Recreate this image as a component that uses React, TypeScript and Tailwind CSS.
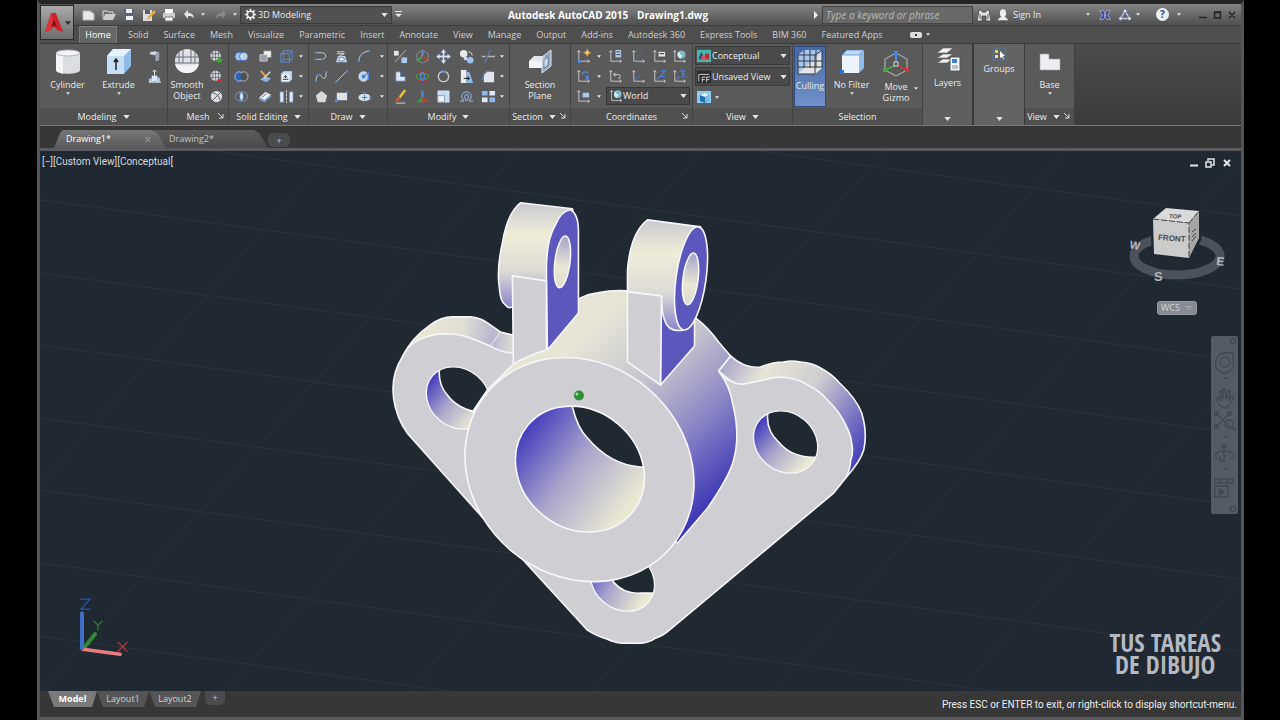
import type { ReactNode } from 'react';

const axes = <path d="M3 2v11h11M1.500 3.500 3 1.500l1.500 2M12.500 11.500l2 1.500-2 1.500" fill="none" stroke="#c9c9c9" />;

const icons: Record<string, ReactNode> = {
  newFile: <path d="M2 4h7l4 3v6H2z" fill="#e9e9e9" stroke="#bbb" />,
  open: <><path d="M2 12V4h4l1 1h5v2" fill="none" stroke="#ddd" /><path d="M4 7h11l-3 6H2z" fill="#ccc" /></>,
  save: <><path d="M3 2h10v12H3z" fill="#5b6575" /><path d="M5 2h6v4H5zM5 9h7v4H5z" fill="#eef0f4" /></>,
  saveAs: <><path d="M2 3h9v11H2z" fill="#d8dbe0" /><path d="M4 3h5v4H4z" fill="#59606c" /><path d="m7 10 6-7 2 2-7 7-2 1z" fill="#e5a93c" /></>,
  print: <><path d="M4 2h8v4H4z" fill="#fff" /><path d="M2 6h12v5H2z" fill="#cfcfcf" /><path d="M4 10h8v4H4z" fill="#fff" stroke="#777" /></>,
  undo: <path d="M3 7l4-4v3c4 0 6 2 6 6-1-3-3-3-6-3v3z" fill="#e6e6e6" />,
  redo: <path d="M13 7L9 3v3c-4 0-6 2-6 6 1-3 3-3 6-3v3z" fill="#8a8a8a" />,
  gear: <><circle cx="8" cy="8" r="4" fill="none" stroke="#eee" strokeWidth="2" /><path d="M8 1v3M8 12v3M1 8h3M12 8h3M3 3l2 2M11 11l2 2M13 3l-2 2M3 13l2-2" stroke="#eee" strokeWidth="2" /></>,
  binoculars: <path d="M3 3h3v2h4V3h3l2 11h-5V9H6v5H1zM4 7v5M12 7v5" fill="#e2e2e2" stroke="#555" />,
  person: <><ellipse cx="8" cy="6" rx="3.500" ry="4.500" fill="#eee" /><path d="M2 14c1-3 4-3 4-4h4c0 1 3 1 4 4z" fill="#eee" /></>,
  exchange: <path d="M2 3h4l3 5-3 5H2l3-5zM14 3h-4L7 8l3 5h4l-3-5z" fill="#39489c" stroke="#c9d0f3" strokeWidth=".7" />,
  a360: <><path d="M8 3 3 12h10z" fill="none" stroke="#c6cbea" strokeWidth="1.500" /><g fill="#e9ebf8" stroke="#5560a0" strokeWidth=".6"><circle cx="8" cy="3.500" r="2" /><circle cx="3" cy="12" r="2" /><circle cx="13" cy="12" r="2" /></g></>,
  presspull: <><path d="M3 3l6-1 4 2v8l-4 1V7L3 6z" fill="#d7dbe2" stroke="#484848" strokeWidth=".6" /><path d="M9 4l4 0v8l-4 1z" fill="#9aa1ad" /></>,
  polysolid: <><path d="M2 10h5v4H2zM9 9h5v5H9z" fill="#9dc3ea" /><path d="M5 7h6v6H5z" fill="#d6e7f8" /><path d="M8 1v6M6 3l2-2 2 2M2 14h13" stroke="#eee" fill="none" /></>,
  meshMore: <><circle cx="7" cy="7" r="5.500" fill="#d9dbe0" /><path d="M2 5h10M2 9h10M7 1v12M4 2v9M10 2v9" stroke="#5c6066" strokeWidth=".8" /><path d="M8 12h6M11 9v6" stroke="#3fae2f" strokeWidth="2.500" /></>,
  meshLess: <><circle cx="7" cy="7" r="5.500" fill="#d9dbe0" /><path d="M2 5h10M2 9h10M7 1v12M4 2v9M10 2v9" stroke="#5c6066" strokeWidth=".8" /><path d="M9 12h5" stroke="#dc2a22" strokeWidth="2.500" /></>,
  meshRefine: <><circle cx="8" cy="8" r="6" fill="#d9dbe0" /><path d="m2 14 12-12M4 4c4 1 7 4 8 8" stroke="#5c6066" fill="none" /></>,
  union: <><ellipse cx="5.500" cy="8" rx="4.500" ry="4.500" fill="#9fc2ee" stroke="#3f6fc0" /><ellipse cx="10.500" cy="8" rx="4.500" ry="4.500" fill="#dbe8f8" fillOpacity=".8" stroke="#3f6fc0" /></>,
  subtract: <><ellipse cx="10.500" cy="8" rx="4.500" ry="5" fill="none" stroke="#bbb" /><ellipse cx="5.500" cy="8" rx="4.500" ry="5" fill="#2f62b8" stroke="#a7c6f2" /><ellipse cx="10" cy="8" rx="3" ry="4" fill="#4f4f4f" /></>,
  intersect: <><ellipse cx="8" cy="8" rx="6.500" ry="5" fill="none" stroke="#7f98c4" /><path d="M8 3c3 2 3 8 0 10-3-2-3-8 0-10z" fill="#c9def7" stroke="#3f6fc0" /></>,
  extrudeFaces: <><path d="M6 2h8v7H6z" fill="#eef1f5" stroke="#888" strokeWidth=".6" /><path d="M2 6h8v7H2z" fill="#9aa0aa" stroke="#e6e6e6" strokeWidth=".6" /></>,
  slice: <><path d="m2 11 6-3 6 2-5 4z" fill="#8db4e4" /><path d="m3 2 6 7" stroke="#e5a93c" strokeWidth="2" /><path d="m13 3-7 7" stroke="#ddd" strokeWidth="1.500" /></>,
  thicken: <><path d="m1 9 7-6 6 3-7 6z" fill="#eef3fa" stroke="#777" strokeWidth=".6" /><path d="m1 9 6 3v2l-6-3zM7 12l7-6v2l-7 6z" fill="#7fa4d4" /><path d="m4 9 5-4" stroke="#666" /></>,
  edges: <path d="M2 5h9v9H2zM5 2h9v9M2 5l3-3v9h9M11 5l3-3M11 14l3-3M5 11l-3 3" fill="none" stroke="#5b8fe0" />,
  shell: <><path d="M2 5l3-3h9v9l-3 3H2z" fill="#c7ddf5" stroke="#58708f" strokeWidth=".6" /><path d="M3 6h8v7H3z" fill="#f2f6fa" /><path d="M4 11h6M7 7v3M5 9l2-2 2 2" stroke="#333" fill="none" /></>,
  separate: <><path d="M1 3h4v11H1zM11 3h4v11h-4z" fill="#dbe9f8" stroke="#5780b8" strokeWidth=".6" /><path d="M8 1v14" stroke="#ddd" strokeDasharray="3 1" /></>,
  polyline: <><path d="M2 4h6c6 0 6 7 0 7H2" fill="none" stroke="#d2d2d2" /><path d="M1 10h2v2H1zM1 3h2v2H1zM8 10h2v2H8z" fill="#4d86e4" /></>,
  helix: <><path d="M3 3h8M3 5h8L5 8h7" fill="none" stroke="#ddd" /><path d="M4 8h8l2 6H2z" fill="#b4d1f2" /><ellipse cx="8" cy="11" rx="3" ry="2" fill="#fff" stroke="#4779b8" /></>,
  arc: <><path d="M2 13C2 7 6 3 13 2" fill="none" stroke="#d2d2d2" /><path d="M1 12h2v2H1zM4 5h2v2H4zM12 1h2v2h-2z" fill="#4d86e4" /></>,
  spline: <><path d="M2 13C3 4 6 5 8 8s5 4 5-5" fill="none" stroke="#d2d2d2" /><path d="M1 12h2v2H1zM4 5h2v2H4zM12 2h2v2h-2z" fill="#4d86e4" /></>,
  line: <><path d="M2 14 14 2" stroke="#d2d2d2" /><path d="M1 13h2v2H1zM13 1h2v2h-2z" fill="#4d86e4" /></>,
  circle: <><circle cx="7" cy="8" r="5" fill="#b9d3f2" stroke="#e6e6e6" /><path d="M7 8l5-4" stroke="#335fa8" /><path d="M12 3v9M6 7h2v2H6z" stroke="#4d86e4" strokeWidth="1.500" /></>,
  polygon: <path d="m8 2 6 5-2 7H4L2 7z" fill="#d9dadd" />,
  rect: <><path d="M3 4h11v8H3z" fill="#dfe2e7" /><path d="M1 11h3v3H1zM13 2h2v2h-2z" fill="#4d86e4" /></>,
  ellipse: <><ellipse cx="8" cy="9" rx="6.500" ry="4" fill="#dfe2e7" /><path d="M5 9h6M8 6v6" stroke="#4779b8" /><path d="M7 3h2v2H7zM13 8h2v2h-2z" fill="#4d86e4" /></>,
  align3d: <><path d="M1 2h5v5H1z" fill="#e6e8ee" /><path d="M9 9h6v6H9z" fill="#a9c9f0" /><path d="M2 14 14 1" stroke="#bbb" /></>,
  gizmoMove: <><path d="m8 1 6 4v7l-6 3-6-3V5z" fill="none" stroke="#8f8f8f" /><path d="M8 8V2" stroke="#5c92ea" strokeWidth="2" /><path d="m8 8-5 4" stroke="#4aa94a" strokeWidth="2" /><path d="m8 8 5 4" stroke="#c63c3c" strokeWidth="2" /></>,
  move: <path d="M8 0 5 4h2v3H4V5L0 8l4 3V9h3v3H5l3 4 3-4H9V9h3v2l4-3-4-3v2H9V4h2z" fill="#e3e6ec" stroke="#5f7fb0" strokeWidth=".4" />,
  copy: <><circle cx="5" cy="5" r="4" fill="#e6e8ee" /><circle cx="12" cy="12" r="3.500" fill="#9ec2ee" /><path d="M10 3c3 0 4 2 4 4" fill="none" stroke="#ddd" /><circle cx="7" cy="10" r="2" fill="#c6d8ee" /></>,
  trim: <><path d="M1 8h4M7 8h8" stroke="#b5b5b5" strokeWidth="1.500" /><path d="M10 1 4 15" stroke="#5e8fd6" /></>,
  chamfer: <path d="M3 3h5v5h5v5H3z" fill="#dfe6f0" stroke="#4b79c0" strokeWidth=".8" />,
  rotate3d: <><circle cx="8" cy="8" r="5.500" fill="none" stroke="#b83232" strokeWidth="1.800" /><ellipse cx="8" cy="8" rx="6.500" ry="3" fill="none" stroke="#3c9c3c" strokeWidth="1.500" /><ellipse cx="8" cy="8" rx="2" ry="4" fill="none" stroke="#4d86e4" strokeWidth="1.500" /></>,
  rotate: <><circle cx="8" cy="8" r="5.500" fill="none" stroke="#c5c8ce" strokeWidth="1.500" /><path d="M6 1l4 1-3 3z" fill="#5c92ea" /></>,
  stretch: <><path d="M2 1h6v14H2z" fill="#e9ebef" /><path d="M8 3h3l4 12H8z" fill="#8fb7e6" /><path d="M5 10h6M9 8l2 2-2 2" stroke="#111" fill="none" /></>,
  fillet: <><path d="M3 14V9c0-4 3-6 6-6h5v11z" fill="#e3e6ec" /><path d="M2 12V9c0-4 3-7 7-7" fill="none" stroke="#5c92ea" /></>,
  matchProp: <><path d="m13 1-6 8" stroke="#f0c244" strokeWidth="2.500" /><path d="M7 8c-2 0-3 2-5 5 3 0 5-1 6-3z" fill="#d5572a" /><path d="M3 15h10" stroke="#ddd" /></>,
  scale3d: <><path d="M8 2v7" stroke="#4d86e4" strokeWidth="2.500" /><path d="M8 8 1 14h7z" fill="#3c9c3c" /><path d="m8 8 7 6H8z" fill="#c63c3c" /></>,
  scale: <><path d="M2 2h12v12H2z" fill="#c4dbf5" stroke="#eef" strokeWidth=".7" /><path d="M2 7h7v7H2z" fill="#f0f2f5" stroke="#6a84a8" strokeWidth=".7" /></>,
  offset: <path d="M1 13h4c0-2-2-2-2-5a5 5 0 0 1 10 0c0 3-2 3-2 5h4M7 12c0-2-1-2-1-4a2 2 0 0 1 4 0c0 2-1 2-1 4z" fill="none" stroke="#8ea6c8" strokeWidth="1.300" />,
  array: <><path d="M1 2h6v5H1zM9 9h6v5H9z" fill="#8fb7ee" /><path d="M9 2h6v5H9zM1 9h6v5H1z" fill="#dfe8f5" /></>,
  ucs: <>{axes}<path d="M2 12h3v3H2z" fill="#4d86e4" /><circle cx="12" cy="4" r="2.500" fill="#f3a536" /><path d="M12 0v8M8 4h8" stroke="#ffe08a" strokeWidth=".7" /></>,
  ucsNamed: <>{axes}<path d="M8 1h6v8H8z" fill="#b3c9e6" /><path d="M9 3h4M9 6h4" stroke="#34455c" /></>,
  ucsWorld: <>{axes}<circle cx="10" cy="6" r="4.500" fill="#7fb8c9" /><path d="M7 3c2 1 1 3 3 3s0 3-1 4c-3-1-4-4-2-7z" fill="#d7ede6" /></>,
  ucsLine: <>{axes}<path d="m4 12 8-8" stroke="#5a7fc0" strokeDasharray="1 1" /></>,
  ucsView: <>{axes}<path d="M7 3h7v5H7z" fill="#e8e8e8" /><path d="M8 5h5" stroke="#222" /></>,
  ucsX: <>{axes}<path d="M7 6c0-3 4-4 6-1M10 7l4 4M14 7l-4 4" stroke="#5a8fe0" fill="none" strokeWidth="1.300" /></>,
  ucsPrev: <>{axes}<path d="M6 6h5c3 0 3 4 0 4M8 4 6 6l2 2" stroke="#d5d5d5" fill="none" /></>,
  ucsOrigin: <>{axes}<path d="m4 12 6-6" stroke="#5a7fc0" /></>,
  ucsZ: <>{axes}<path d="M9 2h5L9 8h5M5 11l3-3" stroke="#4d7fe0" fill="none" strokeWidth="1.300" /></>,
  ucs3: <>{axes}<path d="M9 2h4l-2 3c4 0 3 4-1 3M5 11l3-3" stroke="#4d7fe0" fill="none" strokeWidth="1.300" /></>,
  ucsFace: <>{axes}<path d="M7 4h7v5H7z" fill="#a9c9f0" /></>,
  conceptual: <><path d="M0 1h16v14H0z" fill="#49b9ae" /><path d="m2 9 3-6 3 6v3H2z" fill="#35507e" /><circle cx="8" cy="10" r="3" fill="#d9545c" /><path d="M9 5h5v7h-4z" fill="#b62f3d" /></>,
  savedView: <><path d="M0 1h16v14H0z" fill="#2c2c2c" /><path d="M2 13V5h12M6 14V8h4M11 14V8h4M6 11h3M11 11h3" fill="none" stroke="#ddd" /></>,
  viewBox3d: <><path d="M0 2h14v12H0z" fill="#86cdf2" /><path d="m3 6 5-2 4 2v5l-4 3-5-2z" fill="#1f6fae" /><path d="m3 6 5-2 4 2-4 2z" fill="#e9f6fd" /><path d="M8 8l4-2v5l-4 3z" fill="#7fb4d6" /></>,
};

const Icon = ({ name, className = 'size-4' }: { name: string; className?: string }) => (
  <svg viewBox="0 0 16 16" className={`${className} shrink-0`} aria-hidden="true">{icons[name]}</svg>
);

const Caret = ({ big = false }: { big?: boolean }) => (
  <svg viewBox="0 0 8 5" className={big ? 'w-[7px] h-1 shrink-0' : 'w-1 h-[3px] shrink-0'} aria-hidden="true">
    <path d="M0 0h8L4 5z" fill="#e4e4e4" />
  </svg>
);

const Launcher = () => (
  <button aria-label="Panel settings" className="absolute right-1 top-[5px]">
    <svg viewBox="0 0 6 6" className="size-[6px]"><path d="M0 0l5 5M5 1v4H1" stroke="#ddd" fill="none" /></svg>
  </button>
);

const Tool = ({ name }: { name: string }) => (
  <button aria-label={name} className="flex items-center justify-center h-5"><Icon name={name} className="size-[15px]" /></button>
);

const More = () => (
  <button aria-label="More" className="flex items-center justify-center h-5"><Caret /></button>
);

interface PanelProps {
  title: string;
  width: string;
  caret?: boolean;
  launcher?: boolean;
  children: ReactNode;
}

const Panel = ({ title, width, caret, launcher, children }: PanelProps) => (
  <section className={`${width} shrink-0 flex flex-col border-r border-[#434343] bg-[#5a5a5a]`}>
    <div className="h-[65px] pt-[2px]">{children}</div>
    <div className={`relative h-[17px] bg-[#505050] flex items-center justify-center gap-[6px] ${caret && launcher ? 'pr-3' : ''}`}>
      <span>{title}</span>
      {caret && <Caret big />}
      {launcher && <Launcher />}
    </div>
  </section>
);

const BigTool = ({ label, caret, children }: { label: string; caret?: boolean; children: ReactNode }) => (
  <button className="flex flex-col items-center leading-[11px] pt-[2px]">
    <svg viewBox="0 0 28 28" className="size-7 mb-[3px]" aria-hidden="true">{children}</svg>
    <span className="whitespace-pre-line text-center mb-[2px]">{label}</span>
    {caret && <Caret />}
  </button>
);

const ribbonTabs = ['Solid', 'Surface', 'Mesh', 'Visualize', 'Parametric', 'Insert', 'Annotate', 'View', 'Manage', 'Output', 'Add-ins', 'Autodesk 360', 'Express Tools', 'BIM 360', 'Featured Apps'];

const TitleBar = () => (
  <div className="h-[21px] flex items-center bg-linear-to-b from-[#858585] to-[#505050]">
    <div className="flex items-center gap-1 pl-[7px] w-[166px]">
      {['newFile', 'open', 'save', 'saveAs', 'print', 'undo'].map((name) => (
        <button key={name} aria-label={name}><Icon name={name} /></button>
      ))}
      <Caret />
      <button aria-label="redo" className="pl-1"><Icon name="redo" /></button>
      <Caret />
    </div>
    <label className="relative flex items-center w-[152px] h-[18px] bg-[#515151] border border-[#3a3a3a] pl-[3px] gap-px text-[9px]">
      <Icon name="gear" className="size-[13px]" />
      <select aria-label="Workspace" className="appearance-none flex-1 outline-none bg-transparent">
        <option>3D Modeling</option>
      </select>
      <span className="pr-[3px]"><Caret big /></span>
    </label>
    <button aria-label="Customize" className="pl-[3px]">
      <svg viewBox="0 0 8 8" className="size-[7px]"><path d="M0 0h8v1H0zM0 3h8L4 7z" fill="#e4e4e4" /></svg>
    </button>
    <h1 className="flex-1 flex justify-center gap-[9px] text-[10px] font-bold text-white">
      <span>Autodesk AutoCAD 2015</span>
      <span>Drawing1.dwg</span>
    </h1>
    <svg viewBox="0 0 4 8" className="w-1 h-2 mr-1" aria-hidden="true"><path d="M0 0l4 4-4 4z" fill="#eee" /></svg>
    <input aria-label="Search" placeholder="Type a keyword or phrase" className="w-[151px] h-[18px] px-[3px] text-[10px] italic bg-[#686868] border border-[#444] placeholder:text-[#b9b9b9] outline-none" />
    <div className="flex items-center gap-1 pl-[3px] w-[268px]">
      <button aria-label="Find"><Icon name="binoculars" /></button>
      <button className="flex items-center gap-[3px] w-[86px]"><Icon name="person" className="size-[14px]" />Sign In</button>
      <Caret />
      <button aria-label="Exchange" className="pl-1"><Icon name="exchange" className="size-[14px]" /></button>
      <button aria-label="A360" className="pl-[2px]"><Icon name="a360" className="size-[14px]" /></button>
      <Caret />
      <button aria-label="Help" className="ml-[12px] size-[13px] rounded-full bg-[#f0f0f0] text-[#27479c] text-[10px] leading-[13px] font-bold">?</button>
      <span className="pl-1"><Caret /></span>
      <svg viewBox="0 0 38 8" className="w-[38px] h-2 ml-auto mr-1" aria-hidden="true">
        <path d="M0 6.500h8M15.500 1h6v6h-6zM15 1.500h7M30 1l6 6M36 1l-6 6" stroke="#242424" strokeWidth="1.500" fill="none" />
      </svg>
    </div>
  </div>
);

const Header = () => (
  <header className="flex bg-[#4e4e4e]">
    <button aria-label="Application menu" className="relative z-10 w-[34px] h-[35px] mt-px -mb-4 shrink-0 border border-[#2b2b2b] bg-linear-to-b from-[#aaa] to-[#6c6c6c] flex items-center justify-center gap-px">
      <svg viewBox="0 0 22 24" className="w-5 h-[22px]">
        <path d="M8 1h5l8 21-6-2-4-4-4 4-6 2z" fill="#c9252b" />
        <path d="M8 1 1 22l6-2 4-8z" fill="#dc3436" />
        <path d="m11 8 3 8-3-1-3 1z" fill="#7c1015" />
      </svg>
      <svg viewBox="0 0 8 5" className="w-[6px] h-1"><path d="M0 0h8L4 5z" fill="#2e2e2e" /></svg>
    </button>
    <div className="flex-1 min-w-0">
      <TitleBar />
      <nav className="h-[18px] flex items-end gap-[15px] border-t border-[#3e3e3e] bg-[#4e4e4e] pl-[5px] leading-[17px] whitespace-nowrap text-[#cfcfcf]">
        <a href="#home" className="w-[38px] -mr-1 h-[17px] leading-[15px] text-center bg-[#666] text-white border border-b-0 border-[#7c7c7c]">Home</a>
        {ribbonTabs.map((tab) => <a key={tab} href={`#${tab}`}>{tab}</a>)}
        <button aria-label="Minimize ribbon" className="flex items-center gap-1 ml-3 h-[17px]">
          <span className="w-3 h-[6px] rounded-[2px] bg-[#ddd] flex items-center justify-center"><span className="size-[2px] bg-[#333]"></span></span>
          <Caret />
        </button>
      </nav>
    </div>
  </header>
);

const grid3 = (rows: string[][]) => rows.map((row) => row.map((n, i) => (n === '' ? <More key={`m${i}`} /> : <Tool key={n} name={n} />)));

const Ribbon = () => (
  <div className="flex h-[83px] border-t border-[#3b3b3b] border-b border-b-[#777] bg-linear-to-b from-[#4b4b4b] to-[#3b3b3b] overflow-hidden">
    <Panel title="Modeling" width="w-32" caret>
      <div className="grid grid-cols-[55px_47px_24px] justify-start">
        <BigTool label="Cylinder" caret>
          <path d="M2 5v17c0 5 24 5 24 0V5z" fill="#dcdde2" /><path d="M2 5v17c0 2 4 3 7 4V7z" fill="#f5f5f7" /><ellipse cx="14" cy="5" rx="12" ry="3" fill="#f4f4f6" stroke="#b5b5bc" />
        </BigTool>
        <BigTool label="Extrude" caret>
          <path d="M2 8 8 1h18v17l-7 8H2z" fill="#8fbbe8" /><path d="M2 8h17v18H2z" fill="#c6dff7" /><path d="M2 8 8 1h18l-7 7z" fill="#e6f2fd" /><path d="M11 22V12M9 14l2-3 2 3" stroke="#222" strokeWidth="1.500" fill="none" />
        </BigTool>
        <div className="grid content-start"><Tool name="presspull" /><Tool name="polysolid" /></div>
      </div>
    </Panel>
    <Panel title="Mesh" width="w-[61px]" launcher>
      <div className="grid grid-cols-[38px_20px]">
        <BigTool label={'Smooth\nObject'}>
          <circle cx="14" cy="13" r="12" fill="#dfe1e6" /><path d="M3 9h22M2 15h24M10 1v14M18 1v14M6 4v11M22 4v11" stroke="#6b6f76" fill="none" /><path d="M2 16c2 8 8 9 12 9s10-1 12-9c-7 2-17 2-24 0z" fill="#f3f3f5" />
        </BigTool>
        <div className="grid content-start justify-center"><Tool name="meshMore" /><Tool name="meshLess" /><Tool name="meshRefine" /></div>
      </div>
    </Panel>
    <Panel title="Solid Editing" width="w-20" caret>
      <div className="grid grid-cols-[24px_24px_19px_10px]">
        {grid3([['union', 'extrudeFaces', 'edges', ''], ['subtract', 'slice', 'shell', ''], ['intersect', 'thicken', 'separate', '']])}
      </div>
    </Panel>
    <Panel title="Draw" width="w-[79px]" caret>
      <div className="grid grid-cols-[24px_17px_28px_8px]">
        {grid3([['polyline', 'helix', 'arc', ''], ['spline', 'line', 'circle', ''], ['polygon', 'rect', 'ellipse', '']])}
      </div>
    </Panel>
    <Panel title="Modify" width="w-[122px]" caret>
      <div className="grid grid-cols-[24px_21px_20px_26px_18px_9px]">
        {grid3([['align3d', 'gizmoMove', 'move', 'copy', 'trim', ''], ['chamfer', 'rotate3d', 'rotate', 'stretch', 'fillet', ''], ['matchProp', 'scale3d', 'scale', 'offset', 'array', '']])}
      </div>
    </Panel>
    <Panel title="Section" width="w-[61px]" caret launcher>
      <div className="flex justify-center">
        <BigTool label={'Section\nPlane'}>
          <path d="m3 13 5-5h11v11H3z" fill="#e4e5ea" /><path d="M3 13h13v7H3z" fill="#f3f3f5" /><path d="m16 9 9-7v16l-9 7z" fill="#9db9dd" fillOpacity=".8" stroke="#e8e8e8" /><path d="m18 12 4-3v8l-4 3z" fill="#cfe0f5" stroke="#444" strokeWidth=".5" />
        </BigTool>
      </div>
    </Panel>
    <Panel title="Coordinates" width="w-[122px]" launcher>
      <div className="grid grid-cols-[24px_8px_24px_22px_20px_21px]">
        {grid3([['ucs', '', 'ucsNamed', 'ucsLine', 'ucsView', 'ucsWorld'], ['ucsX', '', 'ucsPrev', 'ucsOrigin', 'ucsZ', 'ucs3'], ['ucsFace', '']])}
        <label className="col-span-4 mt-px ml-[3px] h-[18px] flex items-center px-[2px] bg-[#4a4a4a] border border-[#383838]">
          <Icon name="ucsWorld" className="size-[14px]" />
          <select aria-label="UCS" className="appearance-none flex-1 outline-none min-w-0 bg-transparent"><option>World</option></select>
          <Caret big />
        </label>
      </div>
    </Panel>
    <Panel title="View" width="w-[100px]" caret>
      <div className="flex flex-col gap-[2px] px-[2px]">
        {[['conceptual', 'Conceptual'], ['savedView', 'Unsaved View']].map(([icon, label]) => (
          <label key={label} className="h-[19px] flex items-center gap-px pl-px pr-[2px] bg-[#4a4a4a] border border-[#3a3a3a]">
            <Icon name={icon} className="size-[14px]" />
            <select aria-label={label} className="appearance-none flex-1 outline-none min-w-0 bg-transparent"><option>{label}</option></select>
            <Caret big />
          </label>
        ))}
        <button aria-label="Viewport" className="flex items-center gap-[2px] h-[18px] pl-[2px]"><Icon name="viewBox3d" /><Caret /></button>
      </div>
    </Panel>
    <Panel title="Selection" width="w-[130px]">
      <div className="grid grid-cols-[32px_51px_45px] pl-px">
        <div className="h-[61px] border border-[#2f4a7c] bg-linear-to-b from-[#4569a5] to-[#7290c9] flex justify-center">
          <BigTool label="Culling">
            <path d="M2 6 8 1h18v18l-7 6H2z" fill="#a7c6ee" /><path d="M2 25 26 3v16l-7 6z" fill="#e3e3e3" /><path d="M2 6h17v19H2zM8 1v18M14 1v18M20 1v18M26 1v18M2 12h24M2 18h24M19 6l7-5" stroke="#343a45" fill="none" />
          </BigTool>
        </div>
        <BigTool label="No Filter" caret>
          <path d="m4 7 5-5h17v18l-5 5H4z" fill="#8fbbe8" /><path d="M4 7h17v18H4z" fill="#edf3fa" /><path d="m4 7 5-5h17l-5 5z" fill="#bcd9f7" stroke="#3b74bd" strokeWidth=".6" /><path d="M2 22h4v4H2z" fill="#2f72dd" />
        </BigTool>
        <div className="flex items-center justify-end gap-1">
          <BigTool label={'Move\nGizmo'}>
            <path d="m14 3 11 6v11l-11 6-11-6V9z" fill="none" stroke="#bcbcbc" /><path d="M14 3v12" stroke="#4d86e4" strokeWidth="2" /><path d="m14 15-11 5" stroke="#48a548" strokeWidth="1.500" /><path d="m14 15 11 5" stroke="#c63c3c" strokeWidth="1.500" />
            <path d="M12 1h4v4h-4z" fill="#4d86e4" /><path d="M1 18h4v4H1z" fill="#48a548" /><path d="M23 18h4v4h-4z" fill="#c63c3c" /><path d="M12 12h4v4h-4z" fill="#555" stroke="#ddd" />
          </BigTool>
          <span className="pt-6 pr-1"><Caret /></span>
        </div>
      </div>
    </Panel>
    <section className="w-[51px] shrink-0 flex flex-col items-center justify-between border-r-2 border-[#3a3a3a] bg-[#5f5f5f] pb-1">
      <BigTool label="Layers">
        <g fill="#f0f0f0" stroke="#555" strokeWidth=".6"><path d="m3 17 6-4h10l-6 4z" /><path d="m3 12 6-4h10l-6 4z" /><path d="m3 7 6-5h10l-6 5z" /></g><path d="M16 11h10v14H16z" fill="#f3f6fa" stroke="#555" /><path d="M18 13h5v4h-5z" fill="#3f7fd8" /><path d="M18 20h6M18 22h6" stroke="#888" />
      </BigTool>
      <Caret big />
    </section>
    <section className="w-[51px] shrink-0 flex flex-col items-center justify-between border-r border-[#3a3a3a] bg-[#636363] pb-1">
      <button className="flex flex-col items-center pt-[3px] leading-[15px]">
        <svg viewBox="0 0 14 14" className="size-[14px]"><path d="M1 1h12v12H1z" fill="none" stroke="#4d7fc4" strokeDasharray="2 1" /><path d="M3 3h3v3H3z" fill="#d8d84f" /><path d="M3 8h3v3H3z" fill="#ddd" /><path d="m8 4 5 5H11l1 4-2-3-2 1z" fill="#fff" /></svg>
        <span>Groups</span>
      </button>
      <Caret big />
    </section>
    <Panel title="View" width="w-[50px]" caret launcher>
      <div className="flex justify-center">
        <BigTool label="Base" caret><path d="M4 6h9v5h11v11H4z" fill="#eceef2" stroke="#9a9a9a" strokeWidth=".6" /></BigTool>
      </div>
    </Panel>
  </div>
);

const FileTabs = () => (
  <div className="h-[25px] flex items-end bg-[#373737] border-b-[3px] border-[#5b5b5f] pl-[14px]">
    <div className="relative z-10 w-[112px] h-[18px] flex items-center justify-between pl-3 pr-[14px] text-white bg-linear-to-b from-[#777] to-[#5a5a5a] [clip-path:polygon(9px_0,98px_0,103px_3px,112px_100%,0_100%,6px_3px)]">
      <a href="#drawing1">Drawing1*</a>
      <button aria-label="Close Drawing1" className="text-[#999] leading-none">✕</button>
    </div>
    <div className="w-[114px] h-[18px] -ml-3 flex items-center pl-[15px] text-[#c4c4c4] bg-linear-to-b from-[#5c5c5c] to-[#4a4a4a] [clip-path:polygon(0_0,100px_0,105px_3px,114px_100%,0_100%)]">
      <a href="#drawing2">Drawing2*</a>
    </div>
    <button aria-label="New drawing" className="w-[22px] h-[14px] mb-px leading-[13px] bg-[#4b4b4b] text-[#ccc] rounded-[5px]">+</button>
  </div>
);

const gridRows = [-163, -90, -18, 55, 128, 200, 273, 345, 418, 490, 563, 636];
const gridCols = [-78, 105, 289, 472, 654, 836, 1020, 1204, 1388, 1570];

const boreGradients = [
  { id: 'boreMain', x1: 520, y1: 430, x2: 625, y2: 510 },
  { id: 'boreLeft', x1: 428, y1: 380, x2: 475, y2: 420 },
  { id: 'boreRight', x1: 755, y1: 425, x2: 802, y2: 468 },
  { id: 'boreBottom', x1: 582, y1: 570, x2: 640, y2: 605 },
];

const Model = () => (
  <svg viewBox="40 151 1200 540" preserveAspectRatio="xMidYMid slice" className="absolute inset-0 size-full" aria-hidden="true">
    <defs>
      {boreGradients.map(({ id, ...line }) => (
        <linearGradient key={id} id={id} gradientUnits="userSpaceOnUse" {...line}>
          <stop offset="0" stopColor="#4039bd" />
          <stop offset=".5" stopColor="#aaa6cb" />
          <stop offset="1" stopColor="#e9e8d3" />
        </linearGradient>
      ))}
      <linearGradient id="body" gradientUnits="userSpaceOnUse" x1="590" y1="330" x2="735" y2="485">
        <stop offset="0" stopColor="#e6e5d6" />
        <stop offset=".35" stopColor="#c6c4cd" />
        <stop offset=".65" stopColor="#8d89c6" />
        <stop offset="1" stopColor="#3c35b6" />
      </linearGradient>
      <linearGradient id="lug" x1="0" y1="0" x2="0" y2="1">
        <stop offset="0" stopColor="#c9c8cf" />
        <stop offset=".3" stopColor="#efedd8" />
        <stop offset=".65" stopColor="#dddbd6" />
        <stop offset="1" stopColor="#8985ca" />
      </linearGradient>
      <linearGradient id="lugHole" x1="0" y1="0" x2="0" y2="1">
        <stop offset="0" stopColor="#a5a2c9" />
        <stop offset=".6" stopColor="#e9e7d4" />
        <stop offset="1" stopColor="#dfddd0" />
      </linearGradient>
      <linearGradient id="earLeft" gradientUnits="userSpaceOnUse" x1="410" y1="330" x2="512" y2="345">
        <stop offset="0" stopColor="#eae8d6" />
        <stop offset=".5" stopColor="#e0dfd4" />
        <stop offset=".8" stopColor="#b9b6cf" />
        <stop offset="1" stopColor="#dcdbd4" />
      </linearGradient>
      <linearGradient id="earRight" gradientUnits="userSpaceOnUse" x1="722" y1="360" x2="862" y2="450">
        <stop offset="0" stopColor="#a6a2cd" />
        <stop offset=".25" stopColor="#e7e5d5" />
        <stop offset=".55" stopColor="#cfcdd0" />
        <stop offset="1" stopColor="#4b45ba" />
      </linearGradient>
      <clipPath id="clipMain"><ellipse cx="579.500" cy="469" rx="68" ry="59" transform="rotate(40 579.500 469)" /></clipPath>
      <clipPath id="clipLeft"><ellipse cx="458" cy="398" rx="34" ry="29" transform="rotate(40 458 398)" /></clipPath>
      <clipPath id="clipRight"><ellipse cx="785" cy="442" rx="34" ry="29" transform="rotate(40 785 442)" /></clipPath>
      <clipPath id="clipBottom"><ellipse cx="622" cy="580" rx="34" ry="29" transform="rotate(40 622 580)" /></clipPath>
    </defs>

    <g stroke="#2b343e" strokeWidth="1">
      {gridRows.map((y) => <line key={y} x1="40" y1={y} x2="1240" y2={y + 161} />)}
      {gridCols.map((x) => <line key={x} x1={x - 66} y1="695" x2={x + 412} y2="151" strokeOpacity=".5" />)}
    </g>

    <g stroke="#f7f7fb" strokeWidth="1.600" strokeLinejoin="round">
      <path d="M402 357Q411 338 430 325Q441 317 452 317H470Q480 318 487 323L500 332L516 336V360L440 360Z" fill="url(#earLeft)" />
      <path d="M730 356Q744 369 760 367Q772 362 783 362Q791 360 800 362Q812 363 820 368Q831 374 838 382Q856 399 861 413Q867 433 863 450Q860 461 845 478L800 440L718 371Z" fill="url(#earRight)" />
      <path d="M413 343Q429 333 448 334Q460 334 470 338L490 346Q502 354 516 353L600 400L718 371Q724 379 730 381Q737 385 743 384Q756 382 767 379Q777 376 787 378Q798 379 807 385Q818 390 827 400Q840 413 845 425Q850 434 851 443Q853 453 850 460Q850 468 845 478L833 493L670 629Q662 636 655 638Q648 643 640 643H622Q613 642 607 639Q596 636 587 630L523 560L480 515L413 440Q400 427 395 407Q388 379 402 357Q406 349 413 343Z" fill="#cfced2" />
      <path d="M500 332 490 346" strokeWidth=".8" />
    </g>

    <g stroke="#f7f7fb" strokeWidth="1.600">
      <g clipPath="url(#clipLeft)">
        <path d="M420 360h80v80h-80z" fill="url(#boreLeft)" stroke="none" />
        <path d="M439 360V370Q438 385 447 395Q457 409 480 413H510V350Z" fill="#202832" />
      </g>
      <g clipPath="url(#clipRight)">
        <path d="M745 400h80v80h-80z" fill="url(#boreRight)" stroke="none" />
        <path d="M767 405V415Q766 431 778 442Q792 459 818 457H840V400Z" fill="#202832" />
      </g>
      <g clipPath="url(#clipBottom)">
        <path d="M585 540h80v80h-80z" fill="url(#boreBottom)" stroke="none" />
        <path d="M608 570L613 582Q623 594 640 593H670V550Z" fill="#202832" />
      </g>
      <g fill="none" strokeWidth="1.300">
        <ellipse cx="458" cy="398" rx="34" ry="29" transform="rotate(40 458 398)" />
        <ellipse cx="785" cy="442" rx="34" ry="29" transform="rotate(40 785 442)" />
        <ellipse cx="622" cy="580" rx="34" ry="29" transform="rotate(40 622 580)" />
      </g>
    </g>

    <g stroke="#f7f7fb" strokeWidth="1.600" strokeLinejoin="round">
      <path d="M472 412L487 390L513 364L547 335L580 298Q588 294 597 293Q612 290 627 291Q670 294 695 318Q708 328 718 342L730 356L718 371Q729 385 732 403Q740 435 733 460Q729 476 707 508L677 543L580 470Z" fill="url(#body)" />
      <ellipse cx="579" cy="469.500" rx="120" ry="106" transform="rotate(40 579 469.500)" fill="#cfced2" />
      <g clipPath="url(#clipMain)">
        <path d="M510 400h140v140H510z" fill="url(#boreMain)" stroke="none" />
        <path d="M570 390L572 407Q577 428 587 438Q610 465 640 467H660V390Z" fill="#202832" />
      </g>
      <ellipse cx="579.500" cy="469" rx="68" ry="59" transform="rotate(40 579.500 469)" fill="none" />

      <path d="M520 203L572 209L577 240L546 281V300L512 307Q508 309 505 305Q500 302 499 288Q496 270 502 243Q507 213 520 203Z" fill="url(#lug)" />
      <path d="M546 281V270Q546 240 555 225Q561 211 570 210Q578 214 578 232V313L547 350Z" fill="#5b57bd" />
      <path d="M512 276L546 281V350Q528 355 513 364Z" fill="#cfced2" />
      <ellipse cx="562" cy="262" rx="7.500" ry="26" transform="rotate(7 562 262)" fill="url(#lugHole)" />

      <path d="M660 297L694 315V346L660 385Z" fill="#5b57bd" />
      <path d="M647 220L700 227L683 330Q668 333 664 320Q661 312 661 296L627 292V270Q630 233 647 220Z" fill="url(#lug)" />
      <ellipse cx="690.500" cy="278.500" rx="15" ry="52" transform="rotate(8 690.500 278.500)" fill="#5b57bd" />
      <ellipse cx="690" cy="279" rx="7.500" ry="26" transform="rotate(7 690 279)" fill="url(#lugHole)" />
      <path d="M627 292L661 296L660 385L627 362Z" fill="#cfced2" />
    </g>

    <circle cx="578.500" cy="395.500" r="5" fill="#2b8f34" />
    <circle cx="576.500" cy="394" r="1.500" fill="#9fe0a0" />

    <g strokeLinecap="round" fill="none">
      <path d="M83 649 95 634" stroke="#2e8a35" strokeWidth="4" />
      <path d="M83 649 120 654" stroke="#e77d80" strokeWidth="3.500" />
      <path d="M82 648V613" stroke="#3f70c8" strokeWidth="4" />
      <path d="M81 599h9l-9 10h9" stroke="#2456b8" strokeWidth="1.300" />
      <path d="m94 621 4 4 4-4M98 625v5" stroke="#2d7c35" strokeWidth="1.300" />
      <path d="m118 642 9 9M127 642l-9 9" stroke="#b5363c" strokeWidth="1.300" />
    </g>
  </svg>
);

const ViewCube = () => (
  <svg viewBox="0 0 104 80" className="absolute right-[10px] top-[54px] w-[104px] h-20" aria-hidden="true">
    <ellipse cx="50" cy="51" rx="43" ry="19" fill="none" stroke="#4b525c" strokeWidth="9" />
    <path d="M26 11 42 3 72 6V34L62 52 27 48Z" fill="#202832" stroke="#202832" strokeWidth="5" />
    <path d="M26 14 62 18V53L27 49Z" fill="#cbcbcb" />
    <path d="M26 14 39 3 72 6 62 18Z" fill="#dadada" />
    <path d="M62 18 72 6V33L62 53Z" fill="#a6a6a6" />
    <path d="M26 14 62 18V53M62 18 72 6" fill="none" stroke="#454545" strokeDasharray="6 2" />
    <path d="M65 27l4-3M65 32l4-4M65 36l4-5" stroke="#444" />
    <g className="font-[Liberation_Sans]" fontWeight="700">
      <text x="31" y="35" fontSize="8" fill="#4a4a4a" transform="rotate(4 31 35)">FRONT</text>
      <text x="42" y="13" fontSize="6" fill="#4a4a4a" transform="rotate(4 42 13)">TOP</text>
      <text x="2" y="43" fontSize="11" fill="#b5b9bf" transform="rotate(12 2 43)">W</text>
      <text x="89" y="60" fontSize="12" fill="#b5b9bf" transform="rotate(6 89 60)">E</text>
      <text x="27" y="76" fontSize="13" fill="#b5b9bf">S</text>
    </g>
  </svg>
);

const NavBar = () => (
  <aside className="absolute right-[3px] top-[185px] w-[27px] h-[178px] rounded-[2px] bg-[#555b64]">
    <svg viewBox="0 0 27 178" className="w-full h-full" fill="none" stroke="#424850" strokeWidth="1.300">
      <circle cx="22" cy="5" r="2.500" /><circle cx="22" cy="173" r="2.500" />
      <path d="M5 25a9 9 0 0 1 9-8h8v8a9 9 0 1 1-17 0z" /><circle cx="14" cy="26" r="5" /><path d="M12 42h4M12 101h4M12 133h4" />
      <path d="M9 70 5 62l2-1 3 4-2-9 2-1 2 8V53h2l1 10 2-8h2l-1 9 3-4 2 1-4 7-3 4z" />
      <path d="m5 77 14 14M19 77 5 91M4 76h3v3H4zM17 76h3v3h-3zM4 89h3v3H4z" /><circle cx="18" cy="88" r="4" /><path d="m21 91 4 4" strokeWidth="2" />
      <path d="M13 126V109M10 112l3-4 3 4M9 124c-8-3-5-9 4-9s14 5 6 8M9 120v5h5" />
      <path d="M4 143h6v4H4zM10 143h6v4h-6zM16 143h6v4h-6zM4 150h13v11H4z" /><path d="m8 153 5 3-5 3z" fill="#424850" />
    </svg>
  </aside>
);

const Viewport = () => (
  <main className="relative flex-1 min-h-[540px] bg-[#202832] overflow-hidden">
    <Model />
    <p className="absolute left-[2px] top-1 text-[10px] text-[#d6d9dd] font-[Roboto,sans-serif]">[−][Custom View][Conceptual[</p>
    <svg viewBox="0 0 42 10" className="absolute right-[9px] top-[7px] w-[42px] h-[10px]" stroke="#e4e6ea" fill="none" aria-hidden="true">
      <path d="M0 7.500h8" strokeWidth="2" /><path d="M16 4h5v5h-5zM18 3V1h6v6h-2" strokeWidth="1.500" /><path d="m34 2 6 6M40 2l-6 6" strokeWidth="2" />
    </svg>
    <ViewCube />
    <button className="absolute right-11 top-[150px] w-10 h-[14px] rounded-[3px] border border-[#9499a1] bg-[#858a93] pl-[3px] flex items-center gap-[5px] text-[9px] text-[#d2d5da]">
      WCS
      <svg viewBox="0 0 7 5" className="w-[7px] h-[5px]"><path d="M.500.500h6L3.500 4z" fill="none" stroke="#a9adb4" /></svg>
    </button>
    <NavBar />
    <div className="absolute right-5 bottom-4 text-center text-[25px] leading-[22px] font-bold text-[#b4b8c1] font-['Open_Sans_Condensed','Liberation_Sans_Narrow',sans-serif]">
      <p>TUS TAREAS</p>
      <p>DE DIBUJO</p>
    </div>
  </main>
);

const StatusBar = () => (
  <footer className="h-[29px] flex items-start justify-between bg-[#373737] border-b-[3px] border-[#5b5b5f]">
    <nav className="flex pl-2 leading-4 text-center text-[#cfcfcf]">
      <a href="#model" className="w-[49px] h-4 font-bold text-white bg-[#7a7a7a] [clip-path:polygon(0_0,100%_0,44px_100%,6px_100%)]">Model</a>
      <a href="#layout1" className="w-[52px] h-4 bg-[#555] [clip-path:polygon(0_0,100%_0,47px_100%,6px_100%)]">Layout1</a>
      <a href="#layout2" className="w-[52px] h-4 bg-[#555] [clip-path:polygon(0_0,100%_0,47px_100%,6px_100%)]">Layout2</a>
      <button aria-label="New layout" className="w-[20px] h-[14px] ml-1 leading-[14px] bg-[#4b4b4b] rounded-b-[5px]">+</button>
    </nav>
    <p className="pr-1 pt-[7px] text-[10px] text-[#ececec] font-[Roboto,sans-serif]">Press ESC or ENTER to exit, or right-click to display shortcut-menu.</p>
  </footer>
);

const App = () => (
  <div className="min-h-screen bg-black pl-[37px] pr-9 flex font-['Open_Sans','Noto_Sans',sans-serif] text-[9px] leading-[14px] text-[#ebebeb]">
    <div className="flex-1 min-w-0 flex flex-col border-x-[3px] border-t-4 border-[#56565a] border-t-[#252525]">
      <Header />
      <Ribbon />
      <FileTabs />
      <Viewport />
      <StatusBar />
    </div>
  </div>
);

export default App;
